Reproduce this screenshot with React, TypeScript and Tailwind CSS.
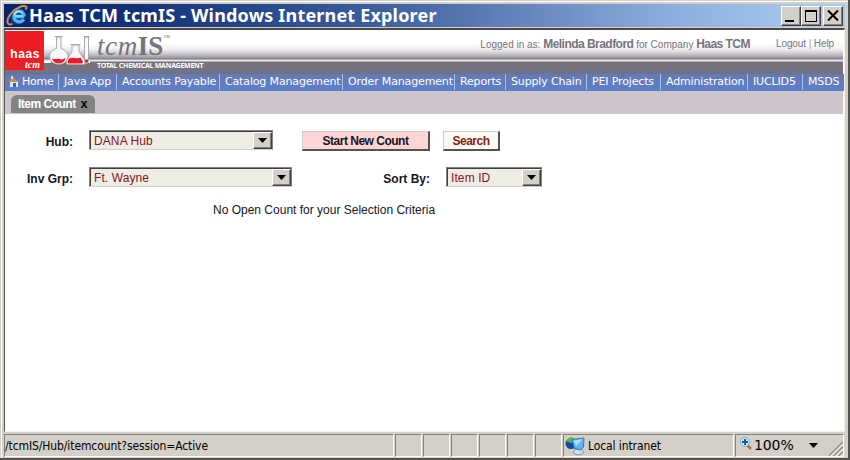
import React from "react";

const navItems: { label: string; width: string }[] = [
  { label: "Java App", width: "w-[58px]" },
  { label: "Accounts Payable", width: "w-[103px]" },
  { label: "Catalog Management", width: "w-[123px]" },
  { label: "Order Management", width: "w-[112px]" },
  { label: "Reports", width: "w-[51px]" },
  { label: "Supply Chain", width: "w-[81px]" },
  { label: "PEI Projects", width: "w-[74px]" },
  { label: "Administration", width: "w-[87px]" },
  { label: "IUCLID5", width: "w-[55px]" },
  { label: "MSDS", width: "w-[39px]" },
];

const raised =
  "border border-t-white border-l-white border-r-[#404040] border-b-[#404040] shadow-[inset_-1px_-1px_0_#85827d]";

function BrowserIcon() {
  return (
    <svg width="22" height="21" viewBox="0 0 22 21" className="mr-px shrink-0">
      <ellipse cx="12" cy="11" rx="8" ry="8.5" fill="#0d3f86" />
      <path
        d="M18 11.500H8.500M18 11.500C18 5 9 4 8 11c-.5 6 6.500 7.500 10 3.500"
        fill="none"
        stroke="#4db4f0"
        strokeWidth="3.4"
      />
      <path
        d="M17 11H8.500M16.500 8.500C14 5 9.500 6 8.200 10"
        fill="none"
        stroke="#b5ecff"
        strokeWidth="1.200"
      />
      <path
        d="M6.500 18.500C1.500 22-1 16 5 8.500 9.500 3 17 0 20 1.500c1 .7.500 2-.5 3"
        fill="none"
        stroke="#d0904e"
        strokeWidth="2"
      />
    </svg>
  );
}

function Flasks() {
  return (
    <svg width="46" height="36" viewBox="0 0 46 36" className="shrink-0">
      <path d="M0 31h7M42 31h4" stroke="#fff" strokeWidth="2" />
      <g fill="#f8f7f9" stroke="#aaa7ae" strokeWidth="1">
        <path d="M11 5.500h7.500M12.500 6v11.500C7 19 4.500 23.500 6 28c2.500 7 15 7 17.500 0 1.500-4.500-1-9-6.500-10.500V6z" />
        <path d="M26.500 13.500h10M28 14v6.500l-5.500 9c-1 2.500 0 4 2 4h14.500c2 0 3-1.500 2-4l-6-9V14z" />
        <path d="M39.500 5.500h6M40.500 6v24.500c0 2.500 4 2.500 4 0V6z" />
      </g>
      <path d="M8 27.500c3 1.500 5-.5 7.500.5s4 0 6-1c-.5 7-12 7-13.500.5z" fill="#ed1c24" />
      <path d="M25 27.500c4-2 7 1 11.500-1l2.500 4c0 1.500-.5 2-2 2H25.500c-2.500 0-2.500-2-.5-5z" fill="#ed1c24" />
      <path d="M41 28.500h3v2c0 1.800-3 1.800-3 0z" fill="#ed1c24" />
    </svg>
  );
}

function TitleBar() {
  return (
    <div className="flex h-[23px] items-center bg-[linear-gradient(90deg,#0a246a_0%,#123078_15%,#3d609f_45%,#6d8dc2_65%,#8cafdd_80%,#a6caf0_96%)] pr-[2px] pl-[2px]">
      <BrowserIcon />
      <h1 className="grow whitespace-nowrap font-['Noto_Sans','Open_Sans',sans-serif] text-[18px] leading-[23px] font-bold tracking-[0.18px] text-white">
        Haas TCM tcmIS - Windows Internet Explorer
      </h1>
      <div className="flex h-[20px]">
        <button className={`flex h-[20px] w-[20px] items-end bg-[#d4d0c8] pb-[3px] pl-[3px] ${raised}`}>
          <span className="h-[2px] w-[9px] bg-black" />
        </button>
        <button className={`flex h-[20px] w-[20px] items-center justify-center bg-[#d4d0c8] ${raised}`}>
          <span className="h-[12px] w-[12px] border border-t-2 border-black" />
        </button>
        <button className={`ml-[2px] flex h-[20px] w-[20px] items-center justify-center bg-[#d4d0c8] ${raised}`}>
          <svg width="12" height="11" viewBox="0 0 12 11">
            <path d="M1 .5l10 10M11 .5l-10 10" stroke="#000" strokeWidth="2" />
          </svg>
        </button>
      </div>
    </div>
  );
}

function Header() {
  return (
    <header className="mr-px flex h-[43px] bg-[linear-gradient(#fff_0px,#fff_12px,#f1f1f2_18px,#c8c6cb_23px,#99969e_27px,#77737b_28px,#e9e8ea_29px,#e9e8ea_30px,#77727e_31px,#77727e_38px,#6b7290_43px)]">
      <div className="flex h-[39px] w-[39px] flex-col bg-[#ee1c23] pt-[17px] pr-[4px] text-right text-white">
        <span className="font-['Liberation_Sans',Arial,sans-serif] text-[12px] leading-[12px] font-bold tracking-[0.6px]">haas</span>
        <span className="font-['Liberation_Serif',serif] text-[10px] leading-[10px] font-bold italic">tcm</span>
      </div>
      <Flasks />
      <div className="flex w-[130px] flex-col pl-[7px]">
        <div className="flex h-[31px] items-start font-['Liberation_Serif',serif] text-[27px] leading-[31px] text-[#77737c]">
          <span className="italic tracking-[0.6px]">tcm</span>
          <span className="font-bold">IS</span>
          <span className="text-[7px] leading-[14px]">™</span>
        </div>
        <span className="whitespace-nowrap font-['Noto_Sans',sans-serif] text-[7px] leading-[8px] font-bold tracking-[-0.25px] text-white">
          TOTAL CHEMICAL MANAGEMENT
        </span>
      </div>
      <div className="flex grow items-start justify-end pt-[6px] pr-[9px] font-['Liberation_Sans',Arial,sans-serif] text-[10px] leading-[14px] whitespace-nowrap text-[#77737c]">
        <span>
          Logged in as: <b className="text-[12px] tracking-[-0.53px]">Melinda Bradford</b> for Company{" "}
          <b className="text-[12px] tracking-[-0.53px]">Haas TCM</b>
        </span>
        <span className="ml-[26px] tracking-[-0.1px]">
          Logout <span className="text-[#83a8d0]">|</span> Help
        </span>
      </div>
    </header>
  );
}

function Nav() {
  return (
    <nav className="flex h-[17px] bg-[linear-gradient(#6679b0,#5d7fcb)] font-['DejaVu_Sans',Verdana,sans-serif] text-[11px] leading-[15px] text-white">
      <div className="flex w-[53px] gap-[3px] pl-[3px]">
        <svg width="11" height="13" viewBox="0 0 11 13" className="mt-[1px]">
          <path d="M2 6h8v6H2z" fill="#d9e8f8" />
          <path d="M0 7l5-5 5 5z" fill="#c98a4b" />
          <path d="M3 1h2v3H3z" fill="#f3dfb5" />
          <path d="M5 8h3v4H5z" fill="#286eb0" />
        </svg>
        <span className="tracking-[-0.2px]">Home</span>
      </div>
      {navItems.map((item) => (
        <div key={item.label} className={`flex shrink-0 ${item.width}`}>
          <span className="mr-[5px] h-[16px] w-px shrink-0 bg-[#a3c4ec]" />
          <span className="whitespace-nowrap tracking-[-0.15px]">{item.label}</span>
        </div>
      ))}
    </nav>
  );
}

function SelectBox({ value, width }: { value: string; width: string }) {
  return (
    <div
      className={`flex h-[20px] shrink-0 justify-between border border-t-[#85827d] border-r-[#85827d] border-b-[#d4d0c8] border-l-[#85827d] bg-[#eeede5] shadow-[inset_1px_1px_0_#404040] ${width}`}
    >
      <span className="pt-px pl-[4px] text-[12px] leading-[18px] tracking-[0.1px] text-[#8b1420]">{value}</span>
      <span className={`mt-px flex h-[17px] w-[19px] items-center justify-center bg-[#d4d0c8] ${raised}`}>
        <svg width="9" height="5" viewBox="0 0 9 5">
          <path d="M0 0h9L4.500 5z" fill="#000" />
        </svg>
      </span>
    </div>
  );
}

function Content() {
  return (
    <main className="flex h-[317px] flex-col bg-white pt-[16px] text-[12px] leading-[20px] text-[#151525]">
      <div className="flex h-[20px]">
        <b className="w-[68px] pt-[2px] text-right">Hub:</b>
        <div className="ml-[16px] flex">
          <SelectBox value="DANA Hub" width="w-[184px]" />
        </div>
        <button className="mt-px ml-[29px] h-[20px] w-[128px] border-t border-r-2 border-b-2 border-l border-t-[#d4d0c8] border-r-[#55534f] border-b-[#55534f] border-l-[#d4d0c8] bg-[#ffd4d4] pt-px text-[12px] leading-[17px] font-bold tracking-[-0.5px]">
          Start New Count
        </button>
        <button className="mt-px ml-[13px] h-[20px] w-[57px] border-t border-r-2 border-b-2 border-l border-t-[#d4d0c8] border-r-[#55534f] border-b-[#55534f] border-l-[#d4d0c8] bg-[#fafaf2] pt-px text-[12px] leading-[17px] font-bold tracking-[-0.5px] text-[#8b1a1a]">
          Search
        </button>
      </div>
      <div className="mt-[17px] flex h-[20px]">
        <b className="w-[68px] pt-[2px] text-right">Inv Grp:</b>
        <div className="ml-[16px] flex">
          <SelectBox value="Ft. Wayne" width="w-[203px]" />
        </div>
        <b className="w-[138px] pt-[2px] text-right">Sort By:</b>
        <div className="ml-[16px] flex">
          <SelectBox value="Item ID" width="w-[96px]" />
        </div>
      </div>
      <p className="mt-[13px] pl-[208px] leading-[20px]">No Open Count for your Selection Criteria</p>
    </main>
  );
}

const pane = "h-[23px] shrink-0 border border-t-[#85827d] border-l-[#85827d] border-r-white border-b-white";

function StatusBar() {
  return (
    <footer className="mt-[2px] flex h-[23px] font-['DejaVu_Sans_Condensed','DejaVu_Sans',sans-serif] text-[12px] leading-[22px] text-black">
      <div className={`w-[390px] ${pane}`}>
        <span className="tracking-[-0.1px]">/tcmIS/Hub/itemcount?session=Active</span>
      </div>
      {[0, 1, 2, 3, 4, 5].map((i) => (
        <div key={i} className={`ml-px w-[27px] ${pane}`} />
      ))}
      <div className={`ml-px flex w-[171px] ${pane}`}>
        <svg width="21" height="20" viewBox="0 0 21 20" className="mt-px ml-px mr-[2px]">
          <path d="M11 13h5l3 3.500c-3 3.500-10 2.500-11-.5z" fill="#d9dbe8" stroke="#8d91ac" />
          <circle cx="6" cy="7.500" r="5.500" fill="#174aa0" />
          <path d="M1 5c2-4 6-5 9-2L7 7 3 6z" fill="#55b84a" />
          <path d="M7 3.500L19 2l-.5 9-3 3-6-1.500z" fill="#58b6f4" stroke="#3973bd" />
          <path d="M8.500 4.500L18 3l-7 7z" fill="#a9ddff" />
        </svg>
        <span className="tracking-[-0.1px]">Local intranet</span>
      </div>
      <div className={`ml-px flex w-[109px] items-center ${pane}`}>
        <svg width="12" height="14" viewBox="0 0 12 14" className="mb-[3px] ml-[4px]">
          <path d="M7 8l4 4" stroke="#b46a40" strokeWidth="2.500" />
          <circle cx="5" cy="5" r="4.500" fill="#c5e6fc" stroke="#7eb1df" />
          <path d="M5 2v6M2 5h6" stroke="#1459ac" strokeWidth="2" />
        </svg>
        <span className="ml-[2px] font-['DejaVu_Sans',sans-serif] text-[14px] leading-[21px] tracking-[-0.1px]">100%</span>
        <svg width="9" height="5" viewBox="0 0 9 5" className="ml-[15px]">
          <path d="M0 0h9L4.500 5z" fill="#000" />
        </svg>
        <svg width="14" height="14" viewBox="0 0 14 14" className="mt-[7px] ml-auto">
          <path d="M0 14L14 0M5 14l9-9M10 14l4-4" stroke="#85827d" strokeWidth="1.500" />
          <path d="M1.500 14L14 1.500M6.500 14L14 6.500M11.500 14l2.500-2.500" stroke="#fff" />
        </svg>
      </div>
    </footer>
  );
}

export default function App() {
  return (
    <div className="flex h-[460px] w-[850px] flex-col border-r-2 border-b-2 border-[#55534f] bg-[#d4d0c8] pt-[4px] pr-[3px] pl-[4px] font-['Liberation_Sans',Arial,sans-serif] shadow-[inset_1px_1px_0_#d4d0c8,inset_2px_2px_0_#fff]">
      <TitleBar />
      <div className="mt-px flex h-[404px] flex-col border-t-2 border-r border-b border-l border-t-[#4b4a48] border-r-[#f4f2ee] border-b-[#f4f2ee] border-l-[#55534f] bg-white pt-px">
        <Header />
        <Nav />
        <div className="mr-px flex h-[23px] items-end bg-[#cec4cb] pb-px pl-[6px]">
          <div className="flex h-[18px] w-[84px] items-center gap-[5px] rounded-t-[6px] bg-[#838383] pl-[7px] text-[12px] leading-[18px] font-bold whitespace-nowrap text-white">
            <span className="tracking-[-0.5px]">Item Count</span>
            <span className="text-black">x</span>
          </div>
        </div>
        <Content />
      </div>
      <StatusBar />
    </div>
  );
}
